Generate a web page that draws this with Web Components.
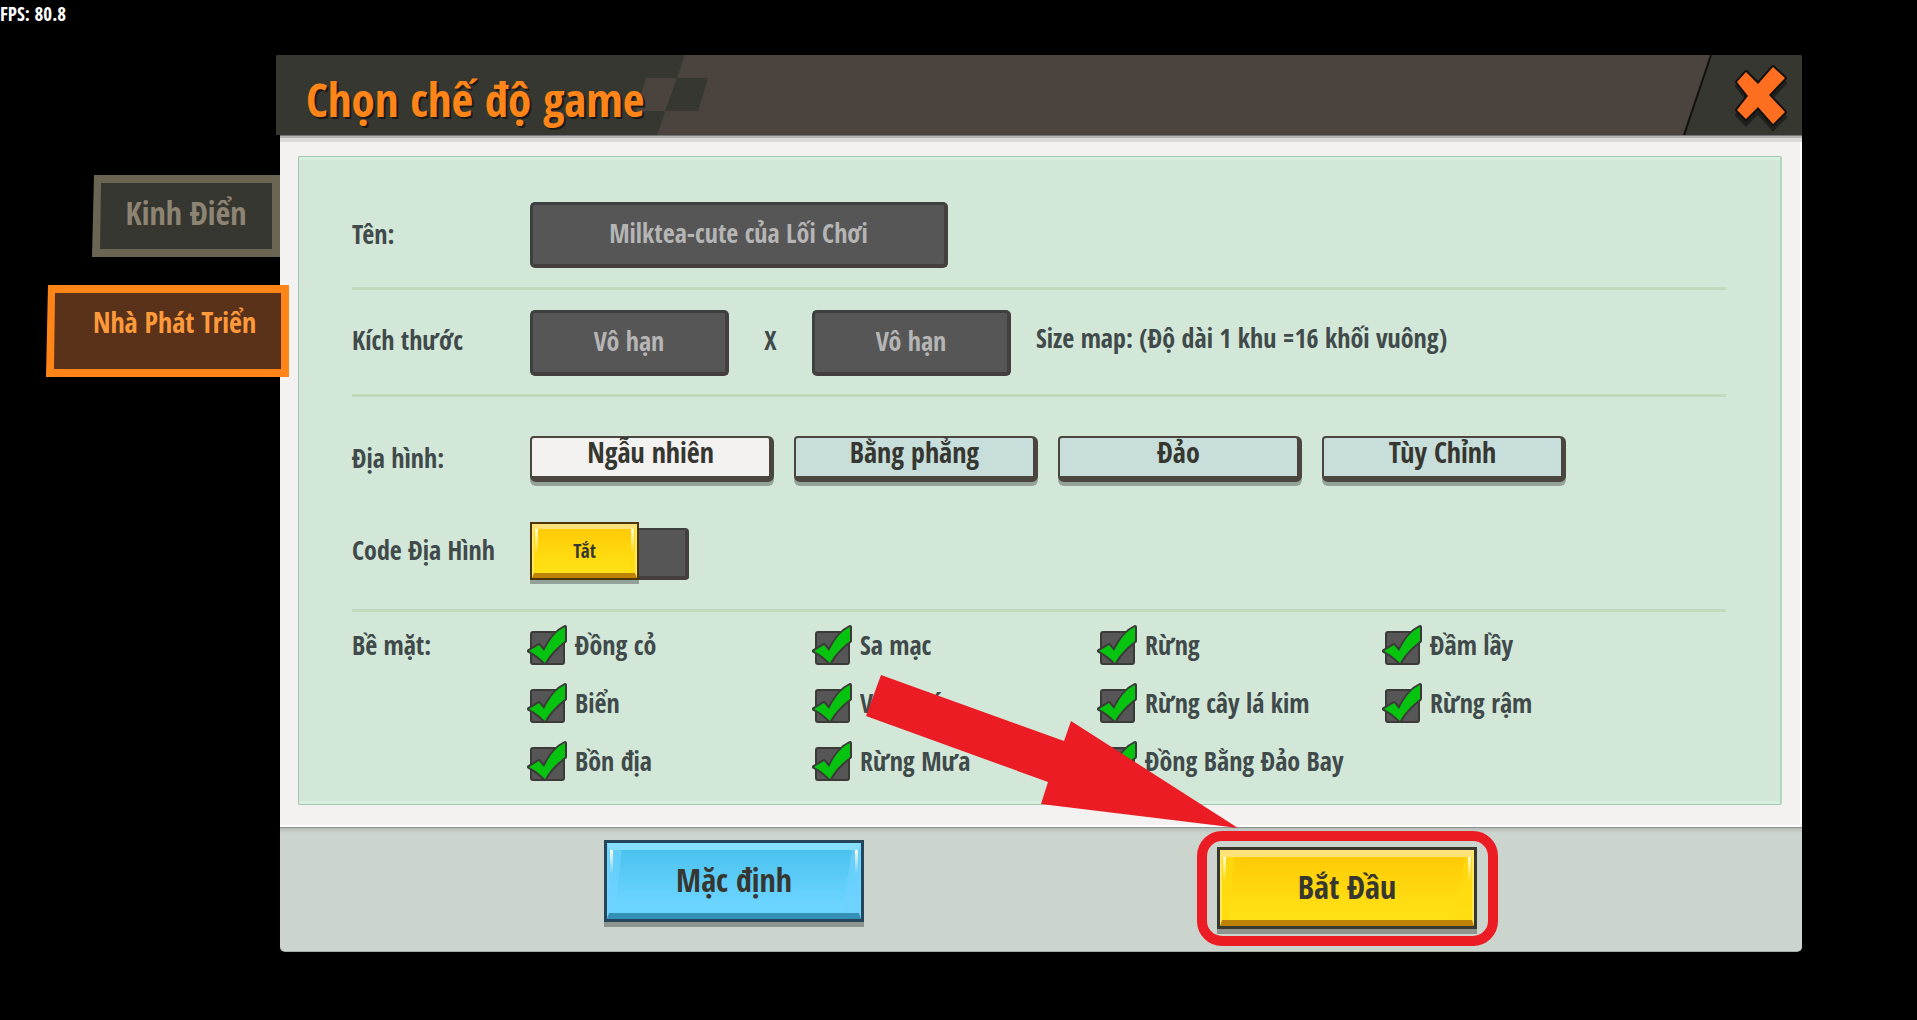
<!DOCTYPE html>
<html lang="vi">
<head>
<meta charset="utf-8">
<title>Chọn chế độ game</title>
<style>
  body {
    margin: 0; min-height: 100vh; background: #000; color: #414a4a;
    font-family: 'Open Sans Condensed', 'Roboto Condensed', 'Noto Sans', sans-serif;
    font-size: 26px; font-weight: 600; line-height: 32px;
  }
</style>
</head>
<body>
<game-screen>
  <fps-counter slot="status">80.8</fps-counter>
  <side-tab slot="tabs">Kinh Điển</side-tab>
  <side-tab slot="tabs" selected>Nhà Phát Triển</side-tab>
  <mode-dialog heading="Chọn chế độ game">
    <map-form></map-form>
    <gloss-button slot="footer">Mặc định</gloss-button>
    <start-callout slot="footer">
      <gloss-button color="gold">Bắt Đầu</gloss-button>
    </start-callout>
  </mode-dialog>
</game-screen>

<script>
const BIOMES = [
  'Đồng cỏ', 'Sa mạc', 'Rừng', 'Đầm lầy',
  'Biển', 'Vùng đá', 'Rừng cây lá kim', 'Rừng rậm',
  'Bồn địa', 'Rừng Mưa', 'Đồng Bằng Đảo Bay',
];

const TERRAINS = ['Ngẫu nhiên', 'Bằng phẳng', 'Đảo', 'Tùy Chỉnh'];

class GameScreen extends HTMLElement {
  constructor() {
    super();
    this.attachShadow({ mode: 'open' });
    this.shadowRoot.innerHTML = `
      <style>
        :host { display: block; }
        header { height: 55px; }
        .stage { display: grid; grid-template-columns: 280px minmax(0, 1fr); padding-right: 115px; }
        nav { display: flex; flex-direction: column; align-items: flex-end; gap: 28px; padding-top: 120px; z-index: 1; }
        main { min-width: 0; }
      </style>
      <header><slot name="status"></slot></header>
      <div class="stage">
        <nav><slot name="tabs"></slot></nav>
        <main><slot></slot></main>
      </div>
    `;
  }
}

class FpsCounter extends HTMLElement {
  constructor() {
    super();
    this.attachShadow({ mode: 'open' });
    this.shadowRoot.innerHTML = `
      <style>
        :host { display: block; color: #fff; font-size: 19px; line-height: 28px; }
      </style>
      FPS: <slot></slot>
    `;
  }
}

class SideTab extends HTMLElement {
  constructor() {
    super();
    this.attachShadow({ mode: 'open' });
    this.shadowRoot.innerHTML = `
      <style>
        :host { display: block; width: 188px; height: 82px; --edge: #6b6554; --fill: #373731; --ink: #8d8474; }
        :host([selected]) { width: 243px; height: 92px; margin-right: -9px; --edge: #ff8519; --fill: #5a3219; --ink: #ff9a3c; }
        button {
          box-sizing: border-box; width: 100%; height: 100%; padding: 0 0 6px; border: 0;
          background: var(--edge); clip-path: polygon(2px 0, 100% 0, 100% 100%, 0 100%);
          color: var(--ink); font: inherit; font-size: 32px; cursor: pointer;
          display: grid; align-items: center; isolation: isolate;
        }
        button::before {
          content: ''; grid-area: 1 / 1; align-self: stretch; margin: 8px 8px 2px; z-index: -1;
          background: var(--fill); clip-path: polygon(1px 0, 100% 0, 100% 100%, 0 100%);
        }
        span { grid-area: 1 / 1; }
        :host([selected]) button { font-size: 28px; }
        :host([selected]) span { padding: 0 0 12px 14px; }
      </style>
      <button type="button"><span><slot></slot></span></button>
    `;
  }

  connectedCallback() {
    this.shadowRoot.querySelector('button').setAttribute('aria-pressed', this.hasAttribute('selected'));
  }
}

class ModeDialog extends HTMLElement {
  constructor() {
    super();
    this.attachShadow({ mode: 'open' });
    this.shadowRoot.innerHTML = `
      <style>
        :host { display: block; }
        .title-bar {
          display: grid; grid-template: 80px / 432px 1fr 119px; margin-left: -4px;
          background: #4b443e; border-radius: 2px 2px 0 0; overflow: hidden;
        }
        .title-bar > * { grid-row: 1; }
        .pattern { grid-column: 1; width: 432px; height: 80px; }
        h1 {
          grid-column: 1 / 3; margin: 0; padding-left: 30px; z-index: 1;
          color: #ff8519; font-size: 47px; font-weight: 600; line-height: 88px; white-space: nowrap;
          text-shadow: 2px 2px 0 #1c1a16;
        }
        .close { grid-column: 3; padding: 0; border: 0; background: none; cursor: pointer; }
        .close svg { display: block; width: 119px; height: 80px; }
        .body {
          padding: 20px 20px 22px 18px; background: #f4f2f1;
          border-top: 1px solid #777; border-bottom: 1px solid #8b918c;
          box-shadow: inset 0 2px 0 #b3b2b1, inset 0 6px 0 #dcdad9, inset -2px -2px 0 #fff;
        }
        .footer {
          display: flex; justify-content: space-between; align-items: flex-start;
          height: 111px; padding: 12px 325px 0 324px; border-bottom: 1px solid #a5ada6;
          background: linear-gradient(#b4bcb6, #ccd5cd 5px); border-radius: 0 0 5px 5px;
        }
      </style>
      <section role="dialog">
        <div class="title-bar">
          <svg class="pattern" viewBox="0 0 432 80" aria-hidden="true">
            <path d="M0 0H409L381 80H0z" fill="#373731"/>
            <path d="M370 23H401L391 56H360z" fill="#4b443e"/>
            <path d="M401 23H432L422 56H389z" fill="#373731"/>
          </svg>
          <h1></h1>
          <button class="close" type="button" aria-label="Đóng">
            <svg viewBox="0 0 119 80">
              <path d="M28 0H119V80H0z" fill="#373731"/>
              <path d="M28 0L1 80" stroke="#12110f" stroke-width="2"/>
              <path d="M63 22L75 34L90 17L102 28L86 45L102 62L90 74L75 57L63 69L54 60L65 45L54 31z" fill="#20201c" stroke="#20201c" stroke-width="4" stroke-linejoin="round"/>
              <path d="M63 17L75 29L90 12L102 23L86 40L102 57L90 69L75 52L63 64L54 55L65 41L54 27z" fill="#ff6f1f" stroke="#12110f" stroke-width="4" stroke-linejoin="round" paint-order="stroke"/>
            </svg>
          </button>
        </div>
        <div class="body"><slot></slot></div>
        <div class="footer"><slot name="footer"></slot></div>
      </section>
    `;
  }

  connectedCallback() {
    const heading = this.getAttribute('heading');
    this.shadowRoot.querySelector('h1').textContent = heading;
    this.shadowRoot.querySelector('section').setAttribute('aria-label', heading);
  }
}

class GlossButton extends HTMLElement {
  constructor() {
    super();
    this.attachShadow({ mode: 'open' });
    this.shadowRoot.innerHTML = `
      <style>
        :host {
          display: block; width: 260px; height: 82px; flex-shrink: 0; font-size: 32px;
          --frame: #24455a; --rim: #86defa; --side: #6fd2ff; --top: #47c0ec; --low: #6bd4ff; --base: #3590b8; --sheen: #6fd2ff;
        }
        :host([color='gold']) { --frame: #38382e; --rim: #ffe27a; --side: #ffe860; --top: #ffc803; --low: #ffe014; --base: #bd8206; --sheen: #ffdc10; }
        :host([small]) { width: 109px; height: 58px; font-size: 19px; --frame: #4c3608; }
        button {
          box-sizing: border-box; width: 100%; height: 100%; padding: 0; cursor: pointer;
          display: grid; align-items: center; isolation: isolate;
          border: 3px solid var(--frame); color: #373731; font: inherit;
          background: linear-gradient(var(--top), var(--low) 80%);
          box-shadow: 0 5px 0 #8e938e;
        }
        button::before, button::after { content: ''; grid-area: 1 / 1; align-self: stretch; z-index: -1; }
        button::before {
          background: var(--sheen); opacity: 0.7;
          clip-path: polygon(0 0, 6% 0, 3% 100%, 0 100%, 0 0, 100% 0, 97% 0, 92% 100%, 100% 100%, 100% 0);
        }
        button::after {
          border: solid; border-width: 7px 2px 6px; border-color: var(--rim) var(--side) var(--base);
          background:
            linear-gradient(#fffbe0, transparent) 1px 0 / 3px 24px no-repeat,
            linear-gradient(#fffbe0, transparent) calc(100% - 1px) 0 / 3px 24px no-repeat;
        }
        :host([small]) button { border-width: 2px; box-shadow: 0 4px 0 #93a298; }
        :host([small]) button::after { border-width: 5px 2px; }
        span { grid-area: 1 / 1; }
        :host(:not([small])) span { padding-bottom: 2px; }
      </style>
      <button type="button"><span><slot></slot></span></button>
    `;
  }

  connectedCallback() {
    if (this.hasAttribute('switch')) {
      const button = this.shadowRoot.querySelector('button');
      button.setAttribute('role', 'switch');
      button.setAttribute('aria-checked', 'false');
      button.setAttribute('aria-label', this.getAttribute('switch'));
    }
  }
}

// Red frame and arrow that point the player at the start button
class StartCallout extends HTMLElement {
  constructor() {
    super();
    this.attachShadow({ mode: 'open' });
    this.shadowRoot.innerHTML = `
      <style>
        :host { display: block; position: relative; margin-top: 7px; }
        .ring {
          position: absolute; inset: -16px -21px -17px -20px;
          border: 10px solid #ec1c24; border-radius: 25px; pointer-events: none;
        }
        svg {
          position: absolute; right: 239px; bottom: 101px; width: 372px; height: 153px;
          fill: #ec1c24; pointer-events: none;
        }
      </style>
      <slot></slot>
      <div class="ring"></div>
      <svg viewBox="0 0 372 153" aria-hidden="true">
        <path d="M15 0L198 66L205 46L372 153L175 129L182 107L0 41z"/>
      </svg>
    `;
  }
}

class TileButton extends HTMLElement {
  constructor() {
    super();
    this.attachShadow({ mode: 'open' });
    this.shadowRoot.innerHTML = `
      <style>
        :host { display: block; flex: 0 1 244px; min-width: 0; }
        button {
          box-sizing: border-box; width: 100%; height: 46px; padding: 0 0 10px; cursor: pointer;
          border: solid #4b4540; border-width: 2px 5px 6px 2px; border-radius: 4px 6px 6px 6px;
          background: #c8deda; box-shadow: 0 4px 0 #93a298;
          color: #373731; font: inherit; font-size: 28px; line-height: 28px;
        }
        :host([selected]) button { background: #f4f2f1; }
      </style>
      <button type="button"><slot></slot></button>
    `;
  }

  connectedCallback() {
    this.shadowRoot.querySelector('button').setAttribute('aria-pressed', this.hasAttribute('selected'));
  }
}

class BiomeCheck extends HTMLElement {
  constructor() {
    super();
    this.attachShadow({ mode: 'open' });
    this.shadowRoot.innerHTML = `
      <style>
        :host { display: block; }
        label { display: flex; align-items: center; gap: 10px; height: 34px; cursor: pointer; white-space: nowrap; }
        .box { position: relative; width: 35px; height: 34px; }
        input {
          appearance: none; box-sizing: border-box; display: block; width: 35px; height: 34px; margin: 0;
          border: 2px solid #3c3a39; border-radius: 3px; background: #565656;
        }
        svg { position: absolute; left: -3px; top: -7px; width: 42px; height: 42px; display: none; pointer-events: none; }
        input:checked + svg { display: block; }
        .name { padding-bottom: 6px; }
      </style>
      <label>
        <span class="box">
          <input type="checkbox" checked>
          <svg viewBox="0 0 42 42" aria-hidden="true">
            <path d="M2 27L12 21L17 27C23 15 29 7 38 3V17C30 23 23 30 18 39C13 34 8 30 2 27z"
              fill="#06c30f" stroke="#3c3a39" stroke-width="4" stroke-linejoin="round" paint-order="stroke"/>
          </svg>
        </span>
        <span class="name"><slot></slot></span>
      </label>
    `;
  }
}

class MapForm extends HTMLElement {
  constructor() {
    super();
    this.attachShadow({ mode: 'open' });
    this.shadowRoot.innerHTML = `
      <style>
        :host {
          display: block; padding: 45px 54px 23px 53px; background: #d2e7d8;
          border: 1px solid #a3c7b0; border-right: 2px solid #b3d6bf; border-radius: 2px;
          box-shadow: inset 0 3px 0 #d6efdf, inset 0 -3px 0 #d6efdf;
        }
        .row { display: grid; grid-template-columns: 178px minmax(0, 1fr); align-items: center; }
        .row.name { padding-bottom: 19px; }
        .row.size { padding: 20px 0 18px; }
        .row.terrain { padding: 39px 0 40px; }
        .row.code { padding-bottom: 29px; }
        .row.name, .row.size, .row.code { border-bottom: 3px solid #c3d8bc; }
        .row.surface { padding-top: 19px; align-items: start; }
        .row > :first-child { padding-bottom: 2px; }
        .row.size > label { padding-bottom: 6px; }
        .row.surface > :first-child { margin-top: -2px; }
        .controls { display: flex; align-items: center; }
        input {
          box-sizing: border-box; width: 199px; height: 66px; padding: 0 0 4px;
          border: solid; border-width: 3px 4px 4px 3px; border-color: #3c403e #453e3f #453e3f #3c403e;
          border-radius: 5px; background: #565656;
          color: #b5b5b5; font: inherit; text-align: center;
        }
        .name input { width: 418px; }
        .times { width: 83px; padding-bottom: 6px; text-align: center; }
        .hint { padding: 0 0 10px 25px; white-space: nowrap; }
        .terrain .controls { gap: 20px; }
        .switch { display: flex; align-items: flex-end; }
        .track {
          box-sizing: border-box; width: 50px; height: 52px; background: #565656;
          border: solid; border-width: 2px 4px 4px 0; border-color: #3c403e #453e3f #453e3f; border-radius: 0 4px 4px 0;
        }
        .biomes { display: grid; grid-template-columns: repeat(4, minmax(0, 285px)); row-gap: 24px; }
      </style>
      <form>
        <div class="row name">
          <label for="name">Tên:</label>
          <div class="controls"><input id="name" type="text" value="Milktea-cute của Lối Chơi"></div>
        </div>
        <div class="row size">
          <label for="width">Kích thước</label>
          <div class="controls">
            <input id="width" type="text" value="Vô hạn">
            <span class="times">X</span>
            <input id="depth" type="text" value="Vô hạn" aria-labelledby="hint">
            <span class="hint" id="hint">Size map: (Độ dài 1 khu =16 khối vuông)</span>
          </div>
        </div>
        <div class="row terrain">
          <span id="terrain">Địa hình:</span>
          <div class="controls" role="group" aria-labelledby="terrain">
            ${TERRAINS.map((name, i) => `<tile-button${i === 0 ? ' selected' : ''}>${name}</tile-button>`).join('')}
          </div>
        </div>
        <div class="row code">
          <span>Code Địa Hình</span>
          <div class="switch">
            <gloss-button color="gold" small switch="Code Địa Hình">Tắt</gloss-button>
            <div class="track"></div>
          </div>
        </div>
        <div class="row surface">
          <span id="surface">Bề mặt:</span>
          <div class="biomes" role="group" aria-labelledby="surface">
            ${BIOMES.map((name) => `<biome-check>${name}</biome-check>`).join('')}
          </div>
        </div>
      </form>
    `;
  }
}

customElements.define('game-screen', GameScreen);
customElements.define('fps-counter', FpsCounter);
customElements.define('side-tab', SideTab);
customElements.define('mode-dialog', ModeDialog);
customElements.define('gloss-button', GlossButton);
customElements.define('start-callout', StartCallout);
customElements.define('tile-button', TileButton);
customElements.define('biome-check', BiomeCheck);
customElements.define('map-form', MapForm);
</script>
</body>
</html>
